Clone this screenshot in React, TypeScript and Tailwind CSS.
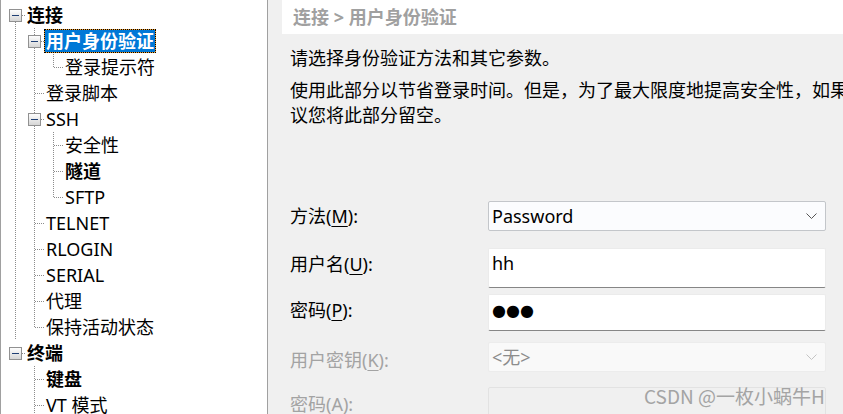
import React from 'react';

type Node = {
  label: string;
  level: number;
  bold?: boolean;
  box?: boolean;
  next: boolean;
  selected?: boolean;
};

const nodes: Node[] = [
  { label: '连接', level: 0, bold: true, box: true, next: true },
  { label: '用户身份验证', level: 1, bold: true, box: true, next: true, selected: true },
  { label: '登录提示符', level: 2, next: false },
  { label: '登录脚本', level: 1, next: true },
  { label: 'SSH', level: 1, box: true, next: true },
  { label: '安全性', level: 2, next: true },
  { label: '隧道', level: 2, bold: true, next: true },
  { label: 'SFTP', level: 2, next: false },
  { label: 'TELNET', level: 1, next: true },
  { label: 'RLOGIN', level: 1, next: true },
  { label: 'SERIAL', level: 1, next: true },
  { label: '代理', level: 1, next: true },
  { label: '保持活动状态', level: 1, next: false },
  { label: '终端', level: 0, bold: true, box: true, next: false },
  { label: '键盘', level: 1, bold: true, next: true },
  { label: 'VT 模式', level: 1, next: true },
];

const FONT = { fontFamily: '"Noto Sans", "Noto Sans CJK SC", sans-serif' };

// which ancestor levels still have siblings below, per row
function withGuides(list: Node[]) {
  const stack: boolean[] = [];
  return list.map((n) => {
    stack[n.level] = n.next;
    return { ...n, guides: stack.slice(0, n.level) };
  });
}

function RowLines({ level, guides, next, box }: { level: number; guides: boolean[]; next: boolean; box?: boolean }) {
  const w = 19 * (level + 1);
  const cx = 9.5 + 19 * level;
  const dot = { stroke: '#8c8c8c', strokeWidth: 1, strokeDasharray: '1 1', shapeRendering: 'crispEdges' as const };
  return (
    <svg width={w} height={26} className="shrink-0 block">
      {guides.map((g, i) =>
        g ? <line key={i} x1={9.5 + 19 * i} y1={0} x2={9.5 + 19 * i} y2={26} {...dot} /> : null
      )}
      {level > 0 && <line x1={cx} y1={0} x2={cx} y2={13.5} {...dot} />}
      {next && <line x1={cx} y1={13.5} x2={cx} y2={26} {...dot} />}
      <line x1={cx} y1={13.5} x2={w} y2={13.5} {...dot} />
      {box && (
        <g>
          <defs>
            <linearGradient id={`bx${level}`} x1="0" y1="0" x2="0" y2="1">
              <stop offset="0" stopColor="#ffffff" />
              <stop offset="1" stopColor="#d4d4d4" />
            </linearGradient>
          </defs>
          <rect x={cx - 6} y={7.5} width={12} height={12} fill={`url(#bx${level})`} stroke="#919191" shapeRendering="crispEdges" />
          <line x1={cx - 3.5} y1={13.5} x2={cx + 3.5} y2={13.5} stroke="#1f3f74" strokeWidth={1} shapeRendering="crispEdges" />
        </g>
      )}
    </svg>
  );
}

function Tree() {
  return (
    <div className="w-[268px] h-full shrink-0 bg-white border-l border-r border-[#a0a0a0] pl-[5px] pt-[2px] text-[18px] text-black" style={FONT}>
      {withGuides(nodes).map((n, i) => (
        <div key={i} className="flex items-center h-[26px]">
          <RowLines level={n.level} guides={n.guides} next={n.next} box={n.box} />
          {n.selected ? (
            <span className="border border-dotted border-black bg-[#f0a030] leading-[22px]">
              <span className="block bg-[#0078d7] px-px text-white font-bold">{n.label}</span>
            </span>
          ) : (
            <span className={`border border-transparent px-px leading-[22px] whitespace-nowrap ${n.bold ? 'font-bold' : ''}`}>{n.label}</span>
          )}
        </div>
      ))}
    </div>
  );
}

function Chevron({ light }: { light?: boolean }) {
  return (
    <svg width="11" height="6" className="block">
      <polyline points="0.5,0.5 5.5,5.5 10.5,0.5" fill="none" stroke={light ? '#c4c4c4' : '#555555'} strokeWidth="1" />
    </svg>
  );
}

function Label({ text, k, disabled, pad }: { text: string; k: string; disabled?: boolean; pad: string }) {
  return (
    <div className={`w-[198px] shrink-0 leading-[25px] ${pad} ${disabled ? 'text-[#a3a3a3]' : 'text-black'}`}>
      {text}(<span className="underline underline-offset-[3px]">{k}</span>):
    </div>
  );
}

export default function App() {
  return (
    <div className="flex w-[843px] h-[414px] overflow-hidden bg-[#f0f0f0]" style={FONT}>
      <Tree />
      <div className="relative flex-1 min-w-0 overflow-hidden text-[18px]">
        <div className="ml-[14px] h-[34px] bg-white pl-[11px] flex items-center font-bold text-[#a0a0a0] whitespace-nowrap">
          连接 &gt; 用户身份验证
        </div>
        <div className="ml-[22px] text-black">
          <p className="mt-[12px] leading-[25px] whitespace-nowrap">请选择身份验证方法和其它参数。</p>
          <p className="mt-[7px] leading-[25px] whitespace-nowrap">
            使用此部分以节省登录时间。但是，为了最大限度地提高安全性，如果计算机不安全，建
            <br />
            议您将此部分留空。
          </p>

          <div className="mt-[73px] w-[536px]">
            <div className="flex items-center h-[30px]">
              <Label text="方法" k="M" pad="" />
              <div className="flex-1 h-full flex items-center justify-between bg-[#fbfcfe] border border-[#c3c6ca] rounded-[2px] pl-[3px] pr-[8px]">
                <span className="leading-[25px]">Password</span>
                <Chevron />
              </div>
            </div>

            <div className="flex mt-[17px] h-[40px]">
              <Label text="用户名" k="U" pad="pt-[4px]" />
              <div className="flex-1 h-full bg-white border border-[#ebebeb] border-b-[#868686] rounded-[2px] pl-[3px] pt-[2px] leading-[25px]">
                hh
              </div>
            </div>

            <div className="flex mt-[6px] h-[37px]">
              <Label text="密码" k="P" pad="pt-[4px]" />
              <div className="flex-1 h-full bg-white border border-[#ebebeb] border-b-[#868686] rounded-[2px] pl-[3px] pt-[2px] leading-[25px]">
                <span className="text-[16px]" style={{ fontFamily: '"DejaVu Sans", sans-serif' }}>●●●</span>
              </div>
            </div>

            <div className="flex mt-[11px] h-[30px]">
              <Label text="用户密钥" k="K" disabled pad="pt-[6px]" />
              <div className="flex-1 h-full flex items-center justify-between bg-[#f9f9f9] border border-[#ececec] rounded-[2px] pl-[3px] pr-[8px] text-[#8c8c8c]">
                <span className="leading-[25px]">&lt;无&gt;</span>
                <Chevron light />
              </div>
            </div>

            <div className="flex mt-[15px] h-[40px]">
              <Label text="密码" k="A" disabled pad="pt-[5px]" />
              <div className="flex-1 h-full bg-[#f0f0f0] border border-[#e2e2e2] rounded-[2px]" />
            </div>
          </div>
        </div>

        <div className="absolute left-[376px] top-[382px] text-[19px] text-[#9c9c9c] opacity-90 whitespace-nowrap" style={{ fontFamily: '"Noto Sans CJK SC", sans-serif' }}>
          CSDN @一枚小蜗牛H
        </div>
      </div>
    </div>
  );
}
